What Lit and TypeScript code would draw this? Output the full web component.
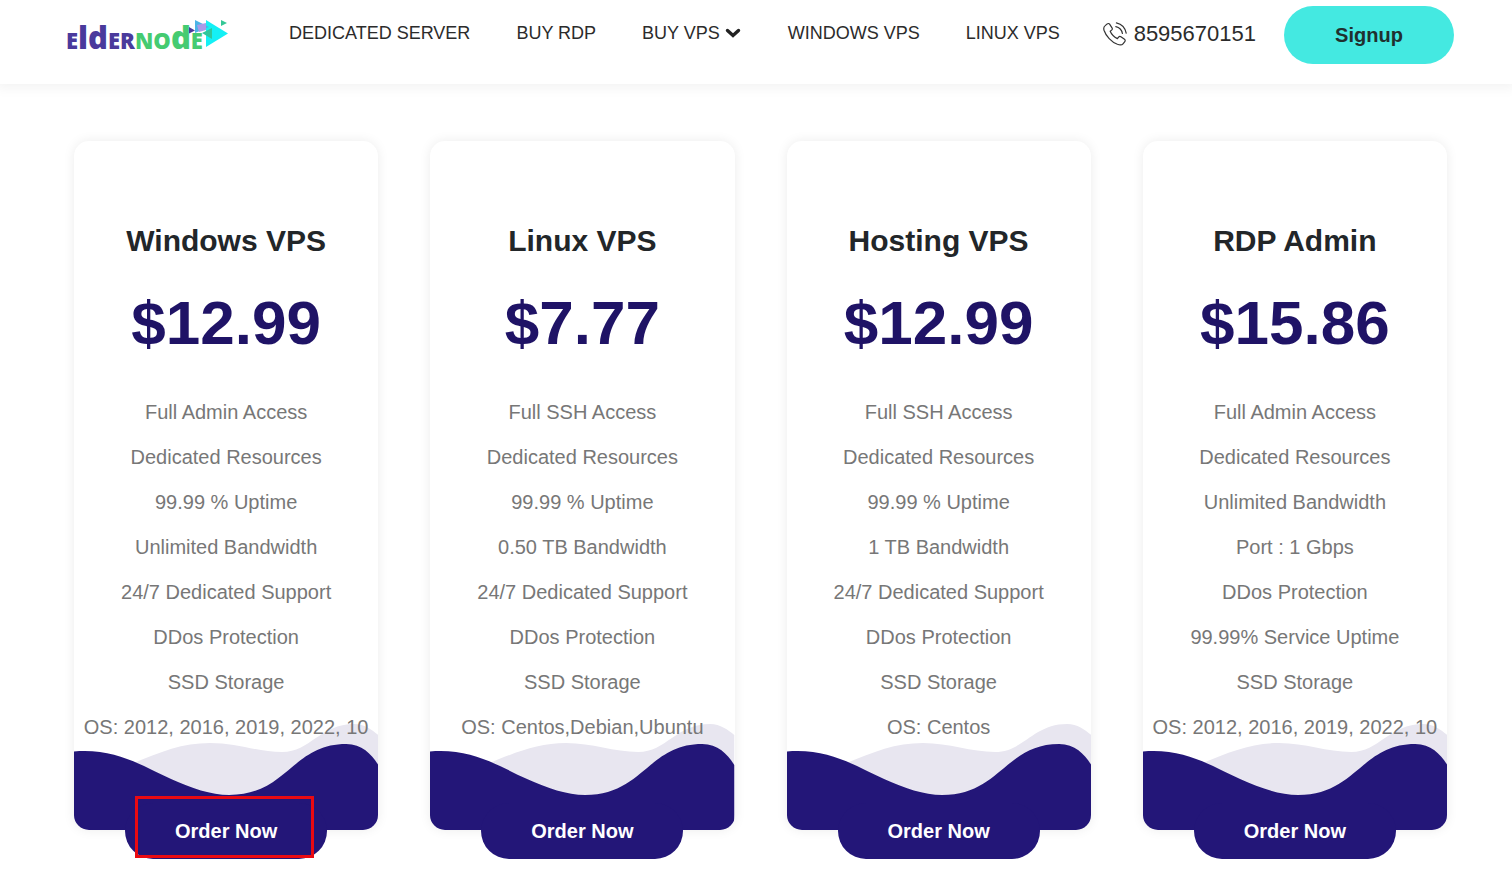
import { LitElement, html, css } from "lit";
import { customElement, property } from "lit/decorators.js";

interface Plan {
  name: string;
  price: string;
  features: string[];
  highlighted?: boolean;
}

const PLANS: Plan[] = [
  {
    name: "Windows VPS",
    price: "$12.99",
    highlighted: true,
    features: [
      "Full Admin Access",
      "Dedicated Resources",
      "99.99 % Uptime",
      "Unlimited Bandwidth",
      "24/7 Dedicated Support",
      "DDos Protection",
      "SSD Storage",
      "OS: 2012, 2016, 2019, 2022, 10",
    ],
  },
  {
    name: "Linux VPS",
    price: "$7.77",
    features: [
      "Full SSH Access",
      "Dedicated Resources",
      "99.99 % Uptime",
      "0.50 TB Bandwidth",
      "24/7 Dedicated Support",
      "DDos Protection",
      "SSD Storage",
      "OS: Centos,Debian,Ubuntu",
    ],
  },
  {
    name: "Hosting VPS",
    price: "$12.99",
    features: [
      "Full SSH Access",
      "Dedicated Resources",
      "99.99 % Uptime",
      "1 TB Bandwidth",
      "24/7 Dedicated Support",
      "DDos Protection",
      "SSD Storage",
      "OS: Centos",
    ],
  },
  {
    name: "RDP Admin",
    price: "$15.86",
    features: [
      "Full Admin Access",
      "Dedicated Resources",
      "Unlimited Bandwidth",
      "Port : 1 Gbps",
      "DDos Protection",
      "99.99% Service Uptime",
      "SSD Storage",
      "OS: 2012, 2016, 2019, 2022, 10",
    ],
  },
];

@customElement("site-header")
export class SiteHeader extends LitElement {
  static styles = css`
    :host {
      display: block;
    }
    .bar {
      display: flex;
      align-items: center;
      padding: 6px 58px 20px 66px;
      background: #fff;
      box-shadow: 0 0 12px 4px rgba(0, 0, 0, 0.05);
    }
    a {
      color: #2b2b2b;
      text-decoration: none;
    }
    .logo {
      display: block;
      width: 164px;
      height: 48px;
    }
    .logo svg,
    .phone svg,
    .chevron {
      display: block;
    }
    .wordmark {
      font-family: "Open Sans", sans-serif;
      font-weight: 800;
    }
    .nav {
      display: flex;
      gap: 46px;
      margin-left: 59px;
      padding-bottom: 4px;
      font-size: 18px;
      line-height: 24px;
      white-space: nowrap;
    }
    .nav a {
      display: flex;
      align-items: center;
      gap: 5px;
    }
    .contact {
      display: flex;
      align-items: center;
      gap: 28px;
      margin-left: auto;
    }
    .phone {
      display: flex;
      align-items: center;
      gap: 7px;
      font-size: 22px;
      line-height: 28px;
      padding-bottom: 2px;
    }
    .signup {
      width: 170px;
      height: 58px;
      padding: 0;
      border: 0;
      border-radius: 29px;
      background: #44e9e1;
      color: #20302f;
      font: bold 20px/24px "Liberation Sans", Arial, sans-serif;
      cursor: pointer;
    }
  `;

  render() {
    return html`
      <header class="bar">
        <a class="logo" href="#" aria-label="Eldernode">
          <svg width="164" height="48" viewBox="0 0 164 48">
            <text class="wordmark" y="38" fill="#4a3a9c" font-size="22">
              E<tspan font-size="31">ld</tspan>ER<tspan fill="#45cb71">NO<tspan font-size="31">d</tspan>E</tspan>
            </text>
            <path d="M140 9L162 22.500L140 36Z" fill="#14f0f5" />
            <path d="M129 9L143 16L129 22Z" fill="#4bb4e6" />
            <path d="M131 14L140 12L140 19L133 21Z" fill="#a99be8" />
            <path d="M123 16L129 19.500L123 22.500Z" fill="#4a3a9c" />
            <path d="M136 22L146 17L146 28Z" fill="#2fc69b" />
            <path d="M155 9L161 12L155 15Z" fill="#35c796" />
          </svg>
        </a>
        <nav class="nav">
          <a href="#">DEDICATED SERVER</a>
          <a href="#">BUY RDP</a>
          <a href="#"
            >BUY VPS
            <svg class="chevron" width="17" height="10" viewBox="0 0 17 10" aria-hidden="true">
              <path d="M2.500 2.500L8 7.500L13.500 2.500" fill="none" stroke="#222" stroke-width="3.400" stroke-linecap="round" />
            </svg>
          </a>
          <a href="#">WINDOWS VPS</a>
          <a href="#">LINUX VPS</a>
        </nav>
        <div class="contact">
          <a class="phone" href="tel:8595670151">
            <svg width="24" height="24" viewBox="0 0 24 24" fill="none" stroke="#333" stroke-width="1.200" stroke-linecap="round" stroke-linejoin="round" aria-hidden="true">
              <path d="M2.200 3.600L4.200 1.900C5 1.300 6 1.400 6.600 2.200L9 5.800C9.500 6.600 9.300 7.500 8.600 8.100L7.200 9.200C8.300 11.800 11.300 15 14.400 16.600L15.600 15.100C16.200 14.400 17.200 14.300 17.900 14.800L21.500 17.300C22.300 17.900 22.400 18.900 21.800 19.600L20 21.800C19 23 17 23.200 14.400 22.300C8.500 20 2.900 14 1 8.200C0.500 6.400 0.800 4.700 2.200 3.600Z" />
              <path d="M13.400 0.800A13 13 0 0 1 23.200 11.200M12.800 4.700A8.500 8.500 0 0 1 19.400 11.500" />
            </svg>
            8595670151
          </a>
          <button class="signup" type="button">Signup</button>
        </div>
      </header>
    `;
  }
}

@customElement("plan-card")
export class PlanCard extends LitElement {
  @property({ attribute: false }) plan!: Plan;

  static styles = css`
    :host {
      display: block;
      min-width: 0;
    }
    .card {
      position: relative;
      padding: 80px 0;
      border-radius: 15px;
      background: #fff;
      box-shadow: 0 0 12px rgba(0, 0, 0, 0.08);
      text-align: center;
    }
    .wave {
      position: absolute;
      left: 0;
      bottom: 0;
      width: 100%;
      height: 107px;
      border-radius: 0 0 15px 15px;
    }
    .content {
      position: relative;
    }
    .name {
      margin: 0;
      color: #222629;
      font-size: 30px;
      line-height: 40px;
    }
    .price {
      margin: 22px 0 0;
      color: #1f1366;
      font-size: 62px;
      font-weight: bold;
      line-height: 80px;
    }
    .features {
      margin: 27px 0 0;
      padding: 0;
      list-style: none;
      color: #777;
      font-size: 20px;
      line-height: 45px;
      white-space: nowrap;
    }
    .order {
      position: absolute;
      left: 0;
      right: 0;
      bottom: -29px;
      width: 202px;
      height: 56px;
      margin: 0 auto;
      padding: 0;
      border: 0;
      border-radius: 28px;
      background: #231678;
      color: #fff;
      font: bold 20px/24px "Liberation Sans", Arial, sans-serif;
      cursor: pointer;
    }
    .marker {
      position: absolute;
      left: 20%;
      bottom: -28px;
      box-sizing: border-box;
      width: 179px;
      height: 62px;
      border: 3px solid #ea0a12;
      pointer-events: none;
    }
  `;

  render() {
    const { name, price, features, highlighted } = this.plan;
    return html`
      <article class="card">
        <svg class="wave" viewBox="0 0 304 107" preserveAspectRatio="none" aria-hidden="true">
          <path
            d="M50 44C84 30 106 20 136 20C162 20 184 29 208 29C236 29 246 1 280 1C290 1 298 7 304 12V107H50Z"
            fill="#e8e6f0"
          />
          <path
            d="M0 28.500C42 25 68 43 97 56C117 65 137 72 155 72C213 72 218 21 272 21C288 21 298 32 304 42V107H0Z"
            fill="#231678"
          />
        </svg>
        <div class="content">
          <h2 class="name">${name}</h2>
          <p class="price">${price}</p>
          <ul class="features">
            ${features.map((feature) => html`<li>${feature}</li>`)}
          </ul>
        </div>
        <button class="order" type="button">Order Now</button>
        ${highlighted ? html`<div class="marker"></div>` : null}
      </article>
    `;
  }
}

@customElement("app-root")
export class AppRoot extends LitElement {
  static styles = css`
    :host {
      display: block;
      font-family: "Liberation Sans", Arial, sans-serif;
    }
    .plans {
      display: grid;
      grid-template-columns: repeat(4, minmax(0, 1fr));
      gap: 52px;
      padding: 57px 65px 51px 74px;
    }
  `;

  render() {
    return html`
      <site-header></site-header>
      <main class="plans">
        ${PLANS.map((plan) => html`<plan-card .plan=${plan}></plan-card>`)}
      </main>
    `;
  }
}
